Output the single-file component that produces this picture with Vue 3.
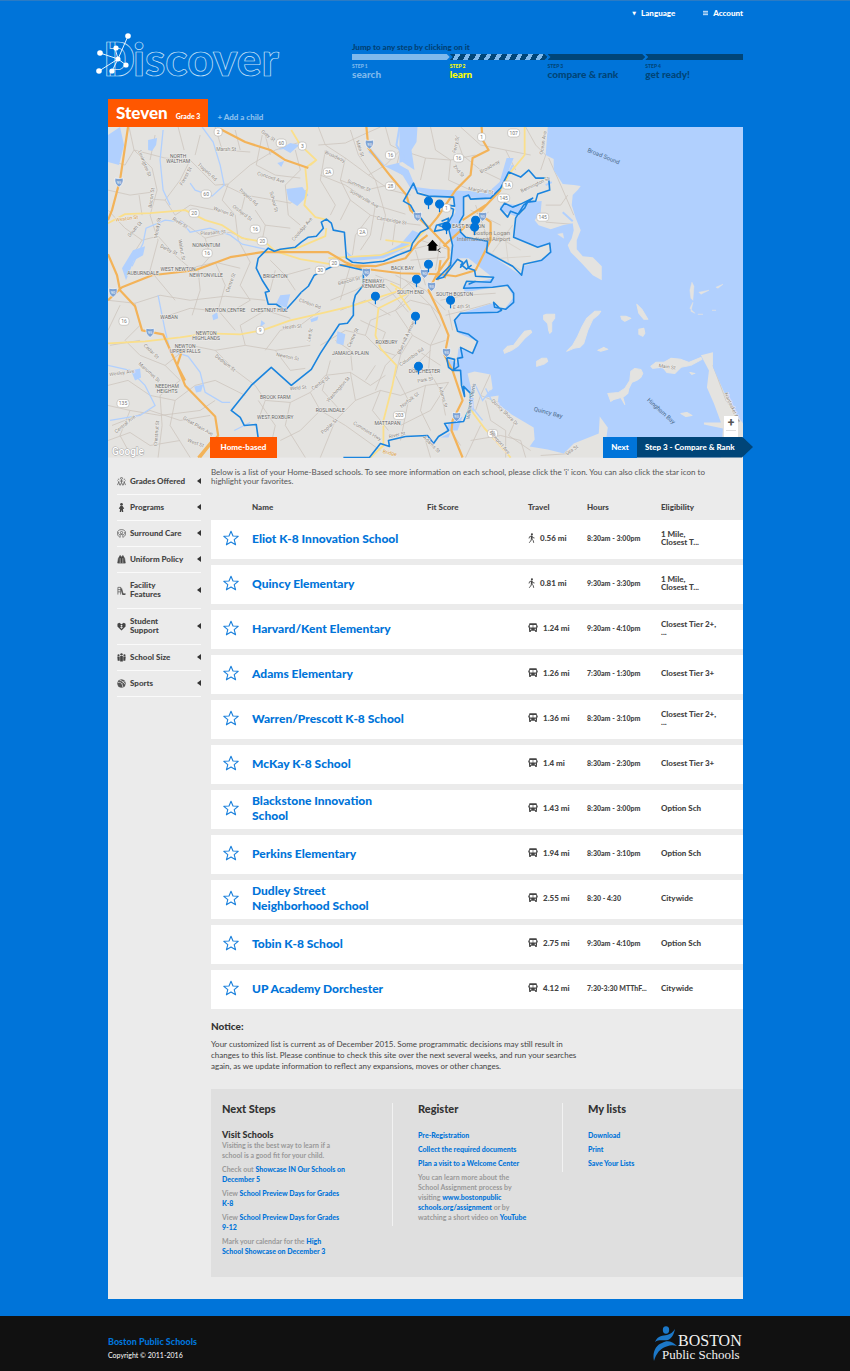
<script setup>
const steps = [
  { n: 'STEP 1', name: 'search', state: 'done' },
  { n: 'STEP 2', name: 'learn', state: 'current' },
  { n: 'STEP 3', name: 'compare & rank', state: 'todo' },
  { n: 'STEP 4', name: 'get ready!', state: 'todo' },
]

const filters = [
  { label: 'Grades Offered', icon: 'grades' },
  { label: 'Programs', icon: 'person' },
  { label: 'Surround Care', icon: 'care' },
  { label: 'Uniform Policy', icon: 'uniform' },
  { label: 'Facility Features', icon: 'facility', tall: true },
  { label: 'Student Support', icon: 'heart', tall: true },
  { label: 'School Size', icon: 'group' },
  { label: 'Sports', icon: 'ball' },
]

const schools = [
  { name: 'Eliot K-8 Innovation School', walk: true, mi: '0.56 mi', hours: '8:30am - 3:00pm', elig: ['1 Mile,', 'Closest T...'] },
  { name: 'Quincy Elementary', walk: true, mi: '0.81 mi', hours: '9:30am - 3:30pm', elig: ['1 Mile,', 'Closest T...'] },
  { name: 'Harvard/Kent Elementary', mi: '1.24 mi', hours: '9:30am - 4:10pm', elig: ['Closest Tier 2+,', '...'] },
  { name: 'Adams Elementary', mi: '1.26 mi', hours: '7:30am - 1:30pm', elig: ['Closest Tier 3+'] },
  { name: 'Warren/Prescott K-8 School', mi: '1.36 mi', hours: '8:30am - 3:10pm', elig: ['Closest Tier 2+,', '...'] },
  { name: 'McKay K-8 School', mi: '1.4 mi', hours: '8:30am - 2:30pm', elig: ['Closest Tier 3+'] },
  { name: 'Blackstone Innovation\nSchool', mi: '1.43 mi', hours: '8:30am - 3:00pm', elig: ['Option Sch'] },
  { name: 'Perkins Elementary', mi: '1.94 mi', hours: '8:30am - 3:10pm', elig: ['Option Sch'] },
  { name: 'Dudley Street\nNeighborhood School', mi: '2.55 mi', hours: '8:30 - 4:30', elig: ['Citywide'] },
  { name: 'Tobin K-8 School', mi: '2.75 mi', hours: '9:30am - 4:10pm', elig: ['Option Sch'] },
  { name: 'UP Academy Dorchester', mi: '4.12 mi', hours: '7:30-3:30 MTThF...', elig: ['Citywide'] },
]

const pins = [
  [428, 201], [439, 204], [446, 226], [475, 220], [474, 227], [428, 264],
  [416, 279], [375, 296], [450, 300], [415, 316], [418, 366],
]

const places = [
  ['NORTH', 178, 158], ['WALTHAM', 178, 163], ['NONANTUM', 206, 247], ['WEST NEWTON', 178, 271],
  ['AUBURNDALE', 143, 275], ['NEWTONVILLE', 206, 277], ['BRIGHTON', 275, 278], ['WABAN', 169, 319],
  ['NEWTON CENTRE', 225, 312], ['CHESTNUT HILL', 269, 312], ['NEWTON', 206, 335], ['HIGHLANDS', 206, 340],
  ['NEWTON', 185, 348], ['UPPER FALLS', 185, 353], ['NEEDHAM', 167, 388], ['HEIGHTS', 167, 393],
  ['BROOK FARM', 275, 399], ['WEST ROXBURY', 275, 419], ['ROSLINDALE', 330, 412], ['JAMAICA PLAIN', 350, 355],
  ['ROXBURY', 386, 344], ['DORCHESTER', 424, 373], ['MATTAPAN', 387, 425], ['BACK BAY', 402, 270],
  ['SOUTH END', 410, 294], ['SOUTH BOSTON', 454, 296], ['EAST BOSTON', 468, 228], ['FENWAY/', 373, 283],
  ['KENMORE', 373, 288],
]

const streets = [
  ['Lexington St', 143, 164, 68], ['Forest St', 187, 177, -60], ['Trapelo Rd', 206, 173, 42],
  ['Marsh St', 226, 151, 0], ['Concord Ave', 270, 179, 18], ['Trapelo Rd', 247, 198, 42],
  ['School St', 272, 202, 75], ['Warren St', 223, 213, 20], ['Orchard St', 241, 214, 38],
  ['Bacon St', 153, 198, -82], ['South St', 136, 230, -48], ['Moody St', 159, 228, -80],
  ['River St', 179, 224, 32], ['Pleasant St', 213, 234, -5], ['Derby St', 168, 251, 25],
  ['Walnut St', 180, 250, 80], ['Centre St', 232, 283, -70], ['Coolidge Ave', 303, 230, -50],
  ['Gray St', 267, 137, 35], ['Main St', 358, 149, 72], ['Broadway', 334, 158, 25],
  ['Summer St', 358, 187, 22], ['Somerville Ave', 363, 200, 30], ['Cambridge St', 391, 222, 10],
  ['Ferry St', 457, 145, -78], ['2nd St', 457, 172, 50], ['Broadway', 490, 168, -30],
  ['Marginal St', 480, 192, 8], ['Ocean Ave', 544, 143, -80], ['Bennington St', 535, 186, -25],
  ['Beacon St', 349, 282, -15], ['Heath St', 292, 328, -5], ['Clinton Rd', 309, 305, 20],
  ['Newton St', 287, 358, 12], ['Lee St', 311, 335, -78], ['Weld St', 298, 389, -5],
  ['Centre St', 321, 384, -35], ['Dedham St', 224, 364, 38], ['Cedar St', 150, 352, 45],
  ['Manomet St', 148, 373, 42], ['Wesley Ave', 122, 374, -8], ['Central Ave', 126, 425, -40],
  ['Chestnut St', 158, 433, -85], ['Great Plain Ave', 197, 427, 30], ['West St', 195, 444, 20],
  ['Blue Hill Avenue', 407, 338, -66], ['Columbia Rd', 412, 358, -35], ['Centre St', 354, 338, -65],
  ['Washington St', 339, 390, -48], ['Park St', 425, 381, -10], ['Norfolk St', 410, 401, -38],
  ['Adams St', 441, 397, 75], ['Poplar St', 330, 427, -42], ['Cummins Hwy', 366, 432, 32],
  ['River St', 397, 436, -12], ['E 4th St', 461, 308, -5], ['Quincy Shore Dr', 503, 413, 45],
  ['Newport Ave', 498, 443, 50], ['Adams St', 430, 445, 45], ['Main St', 666, 368, 8],
  ['Nantasket Ave', 730, 408, 65], ['Sea St', 572, 451, -35],
]

const shields = [
  ['2', 218, 132], ['60', 281, 143], ['3', 302, 146], ['60', 206, 194], ['20', 194, 213],
  ['16', 255, 229], ['20', 262, 241], ['16', 207, 253], ['30', 320, 270], ['16', 124, 321],
  ['9', 260, 330], ['135', 123, 403], ['203', 399, 415], ['2A', 328, 172], ['16', 390, 155],
  ['28', 390, 186], ['16', 458, 158], ['1', 481, 137], ['107', 513, 133], ['1A', 507, 185],
  ['145', 503, 198], ['145', 542, 217], ['2A', 362, 232], ['20', 334, 263], ['3A', 492, 433], ['1', 446, 208],
]

const interstates = [
  ['95', 119, 182], ['90', 113, 292], ['95', 150, 332], ['93', 369, 144], ['93', 417, 216], ['90', 482, 216],
  ['90', 366, 272], ['90', 424, 273], ['93', 431, 286], ['93', 446, 352], ['93', 456, 416],
]
</script>

<template>
  <div class="page">
    <header class="header">
      <nav class="topnav" aria-label="Site">
        <button type="button"><span class="glyph" aria-hidden="true">▼</span>Language</button>
        <button type="button">
          <svg viewBox="0 0 6 6" width="5" height="6" aria-hidden="true"><path d="M0 1h6M0 3h6M0 5h6" stroke="#d5e8fa" stroke-width="1.2" /></svg>Account
        </button>
      </nav>
      <div class="brandbar">
        <a href="#" class="logo" aria-label="Discover">
          <svg viewBox="0 0 188 48" width="188" height="48">
            <g fill="none" stroke="#cfe4f8" stroke-width="0.7" class="logo-text">
              <text x="8" y="43" font-size="48" class="cap">D</text>
              <text x="37" y="43" font-size="46">iscover</text>
            </g>
            <path d="M22 26L32 3M22 26L19 15M22 26L4 20M22 26L3 38M22 26L16 38M22 26L30 32" stroke="#fff" stroke-width="0.9" />
            <g fill="#fff">
              <circle cx="32" cy="3" r="2.8" /><circle cx="20" cy="15" r="2.6" /><circle cx="4" cy="20" r="2.8" />
              <circle cx="3" cy="38" r="2.8" /><circle cx="16" cy="38" r="2.6" /><circle cx="30" cy="32" r="2.6" /><circle cx="22" cy="26" r="2.5" />
            </g>
          </svg>
        </a>
        <div class="progress">
          <p>Jump to any step by clicking on it</p>
          <ol>
            <li v-for="s in steps" :key="s.n" :class="s.state">
              <a href="#">
                <span class="bar"></span>
                <small>{{ s.n }}</small>
                <b>{{ s.name }}</b>
              </a>
            </li>
          </ol>
        </div>
      </div>
      <div class="children">
        <button type="button" class="child"><b>Steven</b><small>Grade 3</small></button>
        <button type="button" class="add">+ Add a child</button>
      </div>
    </header>

    <main class="main">
      <section class="map" aria-label="Map of schools">
        <svg class="map-canvas" viewBox="108 127 634 330">
          <rect x="108" y="127" width="634" height="330" fill="#e4e3e0" />
          <g fill="none" stroke="#cdc6be" stroke-width="0.8" stroke-linejoin="round">
            <path d="M129 127L134 150 152 168 157 190 150 215 158 240 150 270 175 300M134 150L165 158 190 160 215 185 228 184 250 165 275 150 300 142M190 160L180 180 165 200 150 199M165 200L175 215 190 205 215 210M228 184L222 200 235 215 238 240 250 262M222 184L245 195 268 199 290 203 306 190M245 195L240 215M262 135L256 165 275 175 300 178M215 127L222 150 250 152M178 127L184 150M108 190L130 195 152 192M139 195L142 215M108 210L125 228 142 240 158 236M158 236L175 255 190 268 215 262 240 268M180 220L205 238 230 232 248 240M205 238L210 256 198 270 200 290 192 315M215 262L225 285 218 310 235 330M142 240L128 262M250 262L240 285 250 300 230 312 190 308 160 318M108 300L135 303 160 295 190 300 225 296 265 300M135 303L140 325 125 340 140 355 165 365M120 305L108 330" />
            <path d="M165 365L180 380 160 395 162 425 158 457M108 385L128 380 150 395 175 400 195 385 215 380M108 405L130 410 160 415 200 410 215 400M130 410L120 435 132 457M108 440L130 432 150 445 180 440M165 365L190 345 215 350 245 345 275 350 310 345M215 350L235 370 255 385 265 400 258 420M245 345L240 325 265 310 290 318M265 350L280 330 300 325 320 310M275 350L290 370 305 368M265 400L290 402 310 392 325 375M258 400L275 425 268 457M290 402L285 425 305 457M310 392L320 410 345 425 380 450M320 410L300 430 280 440M325 375L350 372 370 385 385 375M350 372L355 400 335 420 320 457M355 400L380 390 400 395 425 385 448 382M380 390L372 410 388 430M335 340L350 350 352 370M320 345L345 330 365 335 380 350 395 355M365 335L370 320 395 310 410 300 430 305M395 310L412 335 400 355 395 375 408 400 400 440M412 335L430 345 445 340M430 305L440 325 430 345 428 370 440 390 445 415M425 385L420 410 430 430M448 382L430 410 400 425M448 310L452 330M445 315L465 310 490 303M440 300L465 295 495 293" />
            <path d="M318 127L325 145 345 158 368 175 390 190 410 195M318 145L345 143 362 135 380 127M345 158L340 180 350 200 370 215 395 222 420 225M320 175L345 185 375 205 405 214M325 150L320 180 335 205 330 215M350 130L358 155 375 180 385 215 380 240M368 175L385 165 400 150 425 158 450 160 475 155M385 127L390 145 400 150 395 170 410 180M340 180L365 190 388 185M350 200L340 220M370 215L355 235 352 255M375 205L370 235 360 250M395 222L392 245M405 127L410 145M425 158L420 180M430 127L435 150 450 160 448 180 470 190M455 135L462 155 480 170 505 182M460 127L480 145 505 150 530 155M505 150L515 170M525 127L535 145 545 155 540 170M548 158L560 185 573 215M545 205L560 205 567 195M545 222L570 224" />
            <path d="M400 252L428 245M410 260L445 257M415 250L425 285M440 240L435 270M420 240L450 250M395 275L425 290 445 310M400 265L400 290M385 285L408 312M380 300L400 290 425 270M412 290L395 310M405 280L440 315M470 210L500 225M468 225L488 212M475 205L487 238M340 280L365 275M330 300L355 290 375 278M340 310L365 300 390 315M350 265L340 300M375 275L400 285M360 320L385 332 380 345M405 345L385 365 375 390M430 350L410 370M440 365L420 352M330 360L322 390 340 410M365 380L375 365M110 345L140 340M112 425L150 410 180 420 210 415M175 400L170 425 190 457M215 380L245 395M108 160L125 165 134 150M155 135L150 160M200 135L195 155M235 130L240 150M295 150L300 170 285 185 288 215 300 225M270 155L265 135M255 210L265 225 290 228M265 225L262 240M270 260L285 275 310 268M275 270L270 290M285 275L295 290" />
            <path d="M490 373L480 395 505 405M480 395L475 410M470 440L500 435 520 440M485 400L490 420 505 430 505 457M515 420L508 435 530 450M540 455L570 453M425 440L430 457M450 430L460 445M480 425L465 457M520 440L525 457M712 365L725 400 740 420M700 355L675 375 655 366" />
          </g>

          <g fill="#b1d0fe">
            <path d="M547 127L545 155 553 159 553 170 562 184 573 185 580 186 577 190 572 195 571 205 575 218 580 230 576 240 576 249 582 256 592 257 601 266 601 280 592 275 580 262 570 252 567 245 571 238 573 230 572 223 562 225 550 229 538 225 534 220 540 212 541 201 528 202 517 217 502 211 499 207 504 203 520 206 530 198 523 211 516 217 514 237 538 247 549 243 550 252 541 260 523 266 520 275 486 252 486 240 465 238 459 232 459 222 463 215 463 197 490 199 500 188 505 178 513 158 506 158 499 182 490 190 464 191 430 189 415 187 413 182 408 170 399 165 399 127 417 127 416 142 411 150 414 170 402 162 385 166 370 148 368 152 382 165 402 175 410 188 430 196 453 197 455 212 448 223 452 245 451 264 436 279 446 275 457 258 468 258 493 278 463 285 464 292 506 285 513 297 502 311 492 303 460 313 453 320 458 333 477 341 473 353 458 348 456 363 447 358 448 368 460 370 461 383 471 394 468 413 473 412 473 398 467 373 474 371 490 374 492 388 485 397 498 395 497 403 511 414 533 427 534 439 529 446 547 449 563 453 573 443 598 433 599 416 607 427 603 457 720 457 722 428 703 424 703 422 720 422 713 403 706 387 708 370 700 355 712 352 712 367 730 407 742 423 742 127Z" />
            <path d="M346 251L350 261 383 258 405 248 419 233 412 230 400 244 382 254 352 256Z" />
            <path d="M108 135L120 127 124 145 119 165 108 162ZM148 140L157 138 156 145 152 151 148 150ZM278 150L290 143 299 145 290 153 283 149ZM286 189L302 187 308 195 297 206 288 200ZM277 163L284 161 281 167ZM128 258L137 254 132 264ZM122 268L133 250 145 246 143 255 134 260 126 280ZM337 331L345 334 343 345 336 343ZM280 295L290 294 286 308 276 303ZM261 320L265 323 260 327ZM131 370L140 368 141 377 135 380ZM194 386L203 384 201 391 196 392ZM212 315L217 312 218 318 213 320ZM310 319L318 316 317 320 311 322ZM448 423L462 416 457 430 445 430ZM440 437L450 432 448 437Z" />
          </g>
          <g fill="none" stroke="#b1d0fe" stroke-width="1.3">
            <path d="M132 266L143 243 146 228 165 220 182 222 190 232 210 228 230 235 242 244 265 249M163 130L160 160 163 190 170 205M202 127L213 142 220 165 224 185 212 196 195 190 190 183M158 295L165 330 170 350 188 356 200 372 205 392 222 402 230 402M108 365L130 370 145 385 155 405 140 415 110 420M234 430L250 422" />
            <path d="M399 127L396 145 408 165M500 190L512 165M545 185L551 182M562 212L572 221" stroke-width="2" />
            <path d="M475 385L482 400 490 390M470 405L482 420M485 388L492 402" />
          </g>
          <g fill="#e4e3e0" stroke="#e4e3e0" stroke-width="1" stroke-linejoin="round">
            <path d="M543 315L546 314 554 314 554 318 551 322 551 331 549 333 548 330 547 323 543 319ZM594 311L600 311 598 314 592 319 587 330 583 343 579 347 573 348 566 351 572 345 577 336 581 327 586 318ZM536 361L541 358 546 358 547 361 543 364 536 366ZM519 337L524 331 530 330 531 332 524 338 517 346 511 350 504 353 503 350 507 346 513 345ZM636 304L641 309 647 319 643 319 638 313ZM620 316L625 316 630 318 624 321 621 319ZM638 329L643 328 644 333 642 336 638 334ZM597 350L603 347 607 349 600 351ZM630 371L634 368 640 369 642 373 640 377 636 380 631 382 628 388 627 393 622 397 624 404 620 397 613 399 610 401 607 393 618 392 624 388 629 380ZM650 366L655 362 663 362 670 358 680 359 688 362 700 357 701 359 690 365 680 367 674 373 666 372 662 367 652 368ZM689 372L694 373 691 374ZM680 413L686 412 691 415 685 416Z" />
            <path d="M689 290L691 282 693 286 692 300 690 298ZM698 292L708 290 700 294ZM715 287L722 284 717 288ZM692 302L689 308 694 313 690 311ZM557 234L562 233 563 238 560 236ZM697 314L702 314ZM711 310L715 310Z" stroke-width="0.5" />
          </g>

          <g fill="none" stroke="#fadf8b" stroke-width="1.8" stroke-linejoin="round">
            <path d="M108 223L125 214 150 213 185 210 205 220 222 225 242 238 265 242 275 251 300 259 330 264M291 130L300 145 316 160 305 168 307 188 304 205 315 217 328 220M316 160L310 165M273 251L297 248 325 236 326 228M328 258L380 255 410 245 425 230M385 240L410 243M108 343L145 341 180 337 208 333 240 334 262 330 290 320 325 312 350 306 375 298 400 290M410 292L378 308 375 335 380 348 396 365 392 385 383 420 383 445 370 457M395 288L410 310M524 127L524 155 510 172 497 195M470 409L484 428 510 457M390 283L402 290" />
          </g>
          <g fill="none" stroke="#f3b359" stroke-width="2.2" stroke-linejoin="round">
            <path d="M128 127L120 180 112 210 108 220M108 254L117 275 120 290 135 306 142 330 163 334 177 365 185 385 215 416 218 435 207 448 200 457M185 380L177 365 182 350M212 440L198 457M108 300L122 287 152 275 195 270 230 257 262 252 328 252 345 262 360 268 400 273 440 274 455 276 475 270 490 240 490 222 478 213 500 190M220 129L245 142 270 150 285 160 308 168M366 127L368 148 390 176 406 195 410 210 430 229 448 248 448 258 437 273 428 290 440 315 448 335 444 355 452 370 462 400 452 420 451 430 462 457M340 265L375 266 405 258 418 242 427 235M481 127L482 140 488 150 472 158 470 175 455 190 445 205 437 217 428 228M462 220L485 205M443 246L465 226M437 280L440 260M444 278L450 262" />
          </g>
          <path d="M485 250L520 270M495 235L520 250M492 252L512 225M500 258L530 256M505 240L508 265" stroke="#d9d4cd" stroke-width="1" fill="none" />

          <g fill="none" stroke="#1a84de" stroke-width="1.6" stroke-linejoin="round">
            <path d="M301 292L295 299 285 310 276 304 268 304 265 292 269 291 262 280 256 268 258 258 268 248 274 251 280 249 295 247 301 242 308 237 316 236 323 228 321 222 326 219 331 223 333 230 344 232 346 258 352 262 363 263 383 261 397 255 410 250 412 243 420 232 428 228 420 217 415 214 410 205 403 201 413 183 417 193 428 196 453 197 454 206 440 204 453 209 452 215 448 222 436 225 434 231 440 230 448 228 452 245 450 265 436 279 443 277 457 259 462 262 460 267 466 260 468 268 474 270 475 276 493 277 490 282 466 281 463 288 492 287 507 285 513 293 513 302 505 309 494 307 493 302 501 310 497 312 460 313 454 320 457 331 468 334 477 341 472 353 460 347 462 357 457 358 458 366 452 370 448 367 446 357 454 359 453 370 460 370 461 385 464 396 463 386 470 393 469 407 463 421 444 423 448 430 438 436 433 443 427 435 405 436 388 440 389 446 380 443 369 457 343 457" />
            <path d="M301 292L308 286 314 275 328 268 337 264 363 270 363 285 355 295 353 303 353 315 347 323 339 324 320 353 311 369 291 385 271 367 251 385 231 410 240 417 244 425 256 424 258 438 266 446 275 450" />
            <path d="M463 197L468 195 470 199 490 198 500 188 508 172 520 177 528 170 535 178 548 178 549 190 537 194 535 201 527 202 524 208 518 214 510 211 507 217 500 209 504 203 512 207 520 204 532 198 523 205 515 218 513 237 537 247 549 243 550 252 541 260 523 264 521 275 512 266 486 252 487 241 465 237 460 232 459 222 463 215Z" />
            <path d="M441 221L448 218 446 231M438 225L446 228M460 264L466 269 471 265M468 284L475 281" />
          </g>

          <g v-for="(s, i) in interstates" :key="'i' + i">
            <path :transform="`translate(${s[1]} ${s[2]})`" d="M-4-4Q0-3 4-4Q5 2 0 5Q-5 2-4-4Z" fill="#7ea3d4" stroke="#fff" stroke-width="0.6" />
            <text :x="s[1]" :y="s[2] + 2" class="shield inter">{{ s[0] }}</text>
          </g>
          <g v-for="(s, i) in shields" :key="'s' + i">
            <rect :x="s[1] - 3 - s[0].length" :y="s[2] - 4" :width="6 + 2 * s[0].length" height="8" rx="3" fill="#fff" stroke="#b5b1ac" stroke-width="0.6" />
            <text :x="s[1]" :y="s[2] + 2" class="shield">{{ s[0] }}</text>
          </g>
          <text v-for="(s, i) in streets" :key="'t' + i" :transform="`translate(${s[1]} ${s[2]}) rotate(${s[3]})`" class="street">{{ s[0] }}</text>
          <text transform="translate(127 220) rotate(-8)" class="street orange">Weston St</text>
          <text transform="translate(389 454) rotate(12)" class="street orange">Bridge</text>
          <text v-for="(p, i) in places" :key="'p' + i" :x="p[1]" :y="p[2]" class="place">{{ p[0] }}</text>
          <text x="491" y="235" class="airport">Boston Logan</text>
          <text x="483" y="241" class="airport">International Airport</text>
          <text transform="translate(602 158) rotate(22)" class="water">Broad Sound</text>
          <text transform="translate(547 414) rotate(15)" class="water">Quincy Bay</text>
          <text transform="translate(659 412) rotate(42)" class="water">Hingham Bay</text>
          <text transform="translate(472 401) rotate(-80)" class="street navy">William T Morris</text>
          <text x="112" y="454" class="google">Google</text>

          <g fill="#0074d9" stroke="#0074d9">
            <g v-for="(p, i) in pins" :key="'pin' + i">
              <circle :cx="p[0]" :cy="p[1]" r="4" />
              <path :d="`M${p[0]} ${p[1]}v8`" stroke-width="1.2" />
            </g>
          </g>
          <path d="M432 239.500L426.500 245.500H428V250.500H436V245.500H437.500Z" fill="#000" />
          <path d="M440 248L437 250L440 252" fill="none" stroke="#222" stroke-width="0.8" />
        </svg>
        <button type="button" class="zoom" aria-label="Zoom in">+</button>
        <span class="tag">Home-based</span>
        <div class="next">
          <a href="#" class="next-label">Next</a>
          <a href="#" class="next-step">Step 3 - Compare &amp; Rank</a>
        </div>
      </section>

      <div class="body">
        <aside class="filters" aria-label="Filters">
          <button v-for="f in filters" :key="f.label" type="button" :class="{ tall: f.tall }">
            <svg viewBox="0 0 10 10" width="9" height="9" aria-hidden="true" fill="none" stroke="#555" stroke-width="0.8">
              <g v-if="f.icon === 'grades'"><circle cx="5" cy="1.500" r="1.100" /><path d="M5 3v3M3 4.500h4M5 6L3.500 9.500M5 6L6.500 9.500M0.500 4L2 5.500 0.500 9M2 5.500L3 9M9.500 4L8 5.500 9.500 9M8 5.500L7 9M1 2.500h1.500M7.500 2.500H9" /></g>
              <g v-else-if="f.icon === 'person'" fill="#444" stroke="none"><circle cx="5" cy="1.500" r="1.500" /><path d="M4 3h2l2 3-.6.700L6.500 6l.5 4H5.500L5 7.500 4.500 10H3l.5-4-.9.700L2 6Z" /></g>
              <g v-else-if="f.icon === 'care'"><path d="M3 9C-.5 7-.5 2 3 1 4 .500 6 .500 7 1 10.500 2 10.500 7 7 9M3.500 9.500V7L1.500 5V3.500M6.500 9.500V7l2-2V3.500" /><circle cx="5" cy="4" r="1.300" /><path d="M3.500 6h3" /></g>
              <g v-else-if="f.icon === 'uniform'"><path d="M3.500 .5L1.500 4 .8 9h8.400l-.7-5-2-3.500L5 2.500Z" fill="#444" /><path d="M3.500 3.500V9M6.500 3.500V9" stroke="#eee" stroke-width=".6" /></g>
              <g v-else-if="f.icon === 'facility'"><path d="M1 9.500V1.500L4 1.500V9.500M1 4h3M1 6.500h3M4 1.500C6 2 5.500 7 7 8.500L10 9" /><path d="M4.500 3L6.500 9.300H9" stroke-width="1.400" /></g>
              <g v-else-if="f.icon === 'heart'"><path d="M5 9.500L.5 5V2L2.500.7 5 2.500 7.500.7 9.500 2V5Z" fill="#444" stroke="none" /><circle cx="5" cy="4" r="1" fill="#eee" stroke="none" /><path d="M3.500 6h3M5 5v2.500" stroke="#eee" stroke-width=".8" /></g>
              <g v-else-if="f.icon === 'group'" fill="#444" stroke="none"><circle cx="5" cy="1.500" r="1.300" /><circle cx="1.700" cy="2.500" r="1.200" /><circle cx="8.300" cy="2.500" r="1.200" /><path d="M3.500 3.200h3V9.500h-3ZM.3 4h2.700V8.500H.8ZM7 4h2.700L9.200 8.500H7Z" /></g>
              <g v-else><circle cx="5" cy="5" r="4.300" fill="#555" /><path d="M1 4C4 3 6 5 6.500 9M3 1.500C6 2 8 4 9 6M6 5L8.500 2" stroke="#eee" stroke-width=".8" /></g>
            </svg>
            <span class="label">{{ f.label }}</span>
            <span class="caret" aria-hidden="true"></span>
          </button>
        </aside>

        <div class="content">
          <p class="intro">Below is a list of your Home-Based schools. To see more information on each school, please click the 'i' icon. You can also click the star icon to highlight your favorites.</p>
          <table class="schools">
            <colgroup>
              <col class="c-star" /><col /><col class="c-fit" /><col class="c-travel" /><col class="c-hours" /><col class="c-elig" />
            </colgroup>
            <thead>
              <tr><th></th><th>Name</th><th>Fit Score</th><th>Travel</th><th>Hours</th><th>Eligibility</th></tr>
            </thead>
            <tbody>
              <tr v-for="s in schools" :key="s.name">
                <td class="star">
                  <button type="button" :aria-label="'Favorite ' + s.name">
                    <svg viewBox="0 0 16 16" width="16" height="16"><path d="M8 1.200L10 6 15.200 6.300 11.200 9.700 12.600 14.800 8 12 3.400 14.800 4.800 9.700.8 6.300 6 6Z" fill="none" stroke="#1a80dc" stroke-width="1.100" stroke-linejoin="round" /></svg>
                  </button>
                </td>
                <td><a href="#" class="school">{{ s.name }}</a></td>
                <td></td>
                <td>
                  <span class="travel">
                    <svg v-if="s.walk" viewBox="0 0 8 11" width="7" height="10" fill="none" stroke="#444" stroke-width="1"><circle cx="4.500" cy="1.300" r="1.200" fill="#444" stroke="none" /><path d="M4.200 3v3.500L6 8.500 6.500 11M4 6.500L3.200 9 1 11M1.200 6L1.800 4 4 3.200 5.500 5 7.500 5.500" /><path d="M4.200 3v3.500" stroke-width="1.800" /></svg>
                    <svg v-else viewBox="0 0 10 10" width="10" height="10" fill="#444"><path d="M1.500 0.300h7L9 2V7.500H8.800V9H7.200V7.800H2.800V9H1.200V7.500H1V2Z" /><path d="M1.800 2H4.700V4.500H1.800ZM5.300 2H8.200V4.500H5.300ZM2 5.700h1.300v1H2ZM6.700 5.700H8v1H6.700Z" fill="#fff" /><path d="M0 2.500h.7v2H0ZM9.300 2.500h.7v2h-.7Z" /></svg>
                    {{ s.mi }}
                  </span>
                </td>
                <td class="hours">{{ s.hours }}</td>
                <td class="elig"><span v-for="l in s.elig" :key="l">{{ l }}</span></td>
              </tr>
            </tbody>
          </table>

          <section class="notice">
            <h2>Notice:</h2>
            <p>Your customized list is current as of December 2015. Some programmatic decisions may still result in changes to this list. Please continue to check this site over the next several weeks, and run your searches again, as we update information to reflect any expansions, moves or other changes.</p>
          </section>

          <section class="panel">
            <div class="col one">
              <h2>Next Steps</h2>
              <h3>Visit Schools</h3>
              <p>Visiting is the best way to learn if a school is a good fit for your child.</p>
              <p>Check out <a href="#">Showcase IN Our Schools on December 5</a></p>
              <p>View <a href="#">School Preview Days for Grades <span class="keep">K-8</span></a></p>
              <p>View <a href="#">School Preview Days for Grades <span class="keep">9-12</span></a></p>
              <p>Mark your calendar for the <a href="#">High<br />School Showcase on December 3</a></p>
            </div>
            <div class="col two">
              <h2>Register</h2>
              <p><a href="#">Pre-Registration</a></p>
              <p><a href="#">Collect the required documents</a></p>
              <p><a href="#">Plan a visit to a Welcome Center</a></p>
              <p>You can learn more about the School Assignment process by visiting <a href="#">www.bostonpublic<br />schools.org/assignment</a> or by watching a short video on <a href="#">YouTube</a></p>
            </div>
            <div class="col three">
              <h2>My lists</h2>
              <p><a href="#">Download</a></p>
              <p><a href="#">Print</a></p>
              <p><a href="#">Save Your Lists</a></p>
            </div>
          </section>
        </div>
      </div>
    </main>

    <footer class="footer">
      <div>
        <a href="#">Boston Public Schools</a>
        <p>Copyright © 2011-2016</p>
      </div>
      <svg viewBox="0 0 90 36" width="90" height="36" role="img" aria-label="Boston Public Schools">
        <g fill="#1c78c8">
          <ellipse cx="13" cy="4" rx="3.200" ry="3.700" />
          <path d="M2 16C5 9 10 10 14 9 18 8 20 6 22 3 21 8 19 12 15 14 10 15 6 13 2 16Z" />
          <path d="M1 35C-1 26 3 19 9 17 14 14 19 15 24 20 18 18 14 20 10 22 5 25 3 29 1 35Z" />
        </g>
        <g fill="#f2f2f2" class="serif">
          <text x="25" y="20" font-size="16">BOSTON</text>
          <text x="9" y="33" font-size="13">Public Schools</text>
        </g>
      </svg>
    </footer>
  </div>
</template>

<style>
body { margin: 0; background: #0074d9; }
</style>

<style scoped>
.page { font-family: Lato, "Open Sans", sans-serif; font-size: 8px; color: #444; background: #0074d9; border-top: 1px solid #2b7bc4; }
.page * { box-sizing: border-box; }
p, h2, h3, ol { margin: 0; padding: 0; }
a { color: #0074d9; text-decoration: none; }
button { font: inherit; color: inherit; border: 0; background: none; padding: 0; text-align: left; cursor: pointer; }
svg { display: block; flex: none; }

.header { margin: 0 107px 0 108px; color: #fff; }
.topnav { display: flex; justify-content: flex-end; gap: 28px; padding-top: 6px; }
.topnav button { display: flex; align-items: center; gap: 5px; height: 12px; font-weight: 900; }
.topnav .glyph { font-family: "DejaVu Sans", sans-serif; font-size: 5px; }
.brandbar { display: flex; justify-content: space-between; align-items: flex-start; padding-top: 14px; height: 80px; }
.logo { margin-left: -12px; }
.logo svg { overflow: visible; }
.logo-text { font-weight: 900; }
.logo-text .cap { font-family: Roboto, sans-serif; }
.progress { width: 391px; padding-top: 8px; font-weight: 900; color: #004175; }
.progress p { line-height: 12px; }
.progress ol { list-style: none; display: flex; margin-top: 1px; }
.progress li { flex: 1; }
.progress a { display: block; color: #004578; }
.progress .bar { display: block; height: 6px; background: #004578; clip-path: polygon(0 0, calc(100% - 3px) 0, 100% 50%, calc(100% - 3px) 100%, 0 100%, 3px 50%); }
.progress li:first-child .bar { clip-path: polygon(0 0, calc(100% - 3px) 0, 100% 50%, calc(100% - 3px) 100%, 0 100%); }
.progress li:last-child .bar { clip-path: polygon(0 0, 100% 0, 100% 100%, 0 100%, 3px 50%); }
.progress small { display: block; font-size: 5px; line-height: 6px; margin-top: 3px; }
.progress b { display: block; font-size: 10px; line-height: 10px; font-weight: 900; }
.progress .done a { color: #7fb9ec; }
.progress .done .bar { background: #7fb9ec; }
.progress .current a { color: #ffff00; }
.progress .current .bar { background: repeating-linear-gradient(120deg, #004578 0 5px, #7fb9ec 5px 9px); }
.children { display: flex; }
.child { display: flex; align-items: baseline; gap: 8px; background: #ff5700; color: #fff; padding: 0 8px; height: 28px; line-height: 28px; }
.child b { font-size: 17px; font-weight: 900; }
.child small { font-size: 7px; font-weight: 900; }
.add { margin-left: 9px; padding-top: 7px; color: #8cc0ee; font-weight: 900; }

.main { margin: 0 107px 0 108px; background: #ebebeb; }
.map { position: relative; }
.map-canvas { width: 100%; height: auto; }
.map-canvas text { font-family: Roboto, sans-serif; }
.place { font-size: 5px; fill: #666; text-anchor: middle; paint-order: stroke; stroke: #eeedeb; stroke-width: 1px; }
.street { font-size: 5px; fill: #8f8a84; text-anchor: middle; paint-order: stroke; stroke: #eeedeb; stroke-width: 1px; }
.street.orange { fill: #d99a3c; }
.street.navy { fill: #4c6c8c; }
.shield { font-size: 5px; fill: #777; text-anchor: middle; }
.shield.inter { fill: #fff; font-size: 4px; }
.airport { font-size: 6px; fill: #8f8a84; text-anchor: middle; }
.water { font-size: 6px; fill: #4a6a8a; text-anchor: middle; }
.google { font-size: 10px; font-weight: 500; fill: #fff; paint-order: stroke; stroke: #aaa; stroke-width: 1px; }
.zoom { position: absolute; right: 5px; bottom: 21px; width: 14px; height: 21px; background: linear-gradient(#ddd, #ddd) 50% 14px / 10px 1px no-repeat, #fff; font: 700 12px/14px Roboto, sans-serif; color: #555; text-align: center; padding-bottom: 6px; }
.tag { position: absolute; left: 102px; bottom: 0; width: 67px; height: 21px; line-height: 21px; text-align: center; background: #ff5700; color: #fff; font-weight: 900; }
.next { position: absolute; right: -10px; bottom: 0; display: flex; height: 21px; line-height: 20px; font-weight: 900; }
.next a { color: #fff; }
.next-label { width: 34px; text-align: center; background: #0074d9; }
.next-step { width: 116px; padding-left: 8px; background: #004578; clip-path: polygon(0 0, calc(100% - 11px) 0, 100% 50%, calc(100% - 11px) 100%, 0 100%); }

.body { display: flex; gap: 10px; padding: 10px 0 22px 9px; }
.filters { width: 84px; flex: none; padding-top: 1px; }
.filters button { display: flex; align-items: center; gap: 4px; width: 100%; height: 26px; border-bottom: 1px solid #fafafa; font-weight: 900; line-height: 9px; }
.filters .tall { height: 36px; }
.filters .label { flex: 1; }
.filters .tall .label { padding-right: 16px; }
.filters .caret { border: 3px solid transparent; border-right: 4px solid #333; border-left: 0; }
.content { flex: 1; min-width: 0; }
.intro { line-height: 9px; padding-right: 20px; color: #555; }
.schools { width: 100%; margin-top: 8px; table-layout: fixed; border-spacing: 0 6px; border-collapse: separate; }
.c-star { width: 41px; }
.c-fit { width: 101px; }
.c-travel { width: 59px; }
.c-hours { width: 74px; }
.c-elig { width: 82px; }
.schools th, .schools td { padding: 0; text-align: left; font-weight: 900; }
.schools th { height: 14px; vertical-align: middle; }
.schools td { height: 39px; background: #fff; vertical-align: middle; }
.schools tbody td { padding-bottom: 2px; }
.star button { display: block; margin-left: 12px; }
.school { display: block; white-space: pre-line; font-size: 12px; line-height: 15px; font-weight: 900; }
.travel { display: flex; align-items: center; gap: 5px; }
.schools .hours { font-size: 7px; white-space: nowrap; }
.elig span { display: block; line-height: 8px; }

.notice { padding-top: 5px; }
.notice h2 { font-size: 10px; line-height: 12px; font-weight: 900; color: #333; }
.notice p { max-width: 374px; margin-top: 7px; line-height: 11px; }
.panel { display: flex; margin-top: 17px; padding: 14px 11px 17px; background: #dfdfdf; color: #999; font-weight: 700; font-size: 7px; line-height: 10px; align-items: flex-start; }
.panel h2 { font-size: 11px; line-height: 12px; color: #333; font-weight: 900; margin-bottom: 15px; }
.panel h3 { font-size: 9px; line-height: 10px; color: #333; font-weight: 900; }
.panel p { margin-bottom: 4px; }
.panel a { font-weight: 900; }
.keep { white-space: nowrap; }
.col.one { width: 170px; padding-right: 44px; }
.col.two { width: 170px; padding: 0 32px 0 25px; border-left: 1px solid #f2f2f2; }
.col.three { padding-left: 25px; border-left: 1px solid #f2f2f2; }

.footer { margin-top: 17px; padding: 10px 107px 10px 108px; background: #111; color: #fff; display: flex; justify-content: space-between; align-items: flex-start; }
.footer div { padding-top: 9px; font-size: 7px; line-height: 13px; }
.footer a { font-size: 9px; font-weight: 900; }
.serif { font-family: "Liberation Serif", serif; }
</style>
